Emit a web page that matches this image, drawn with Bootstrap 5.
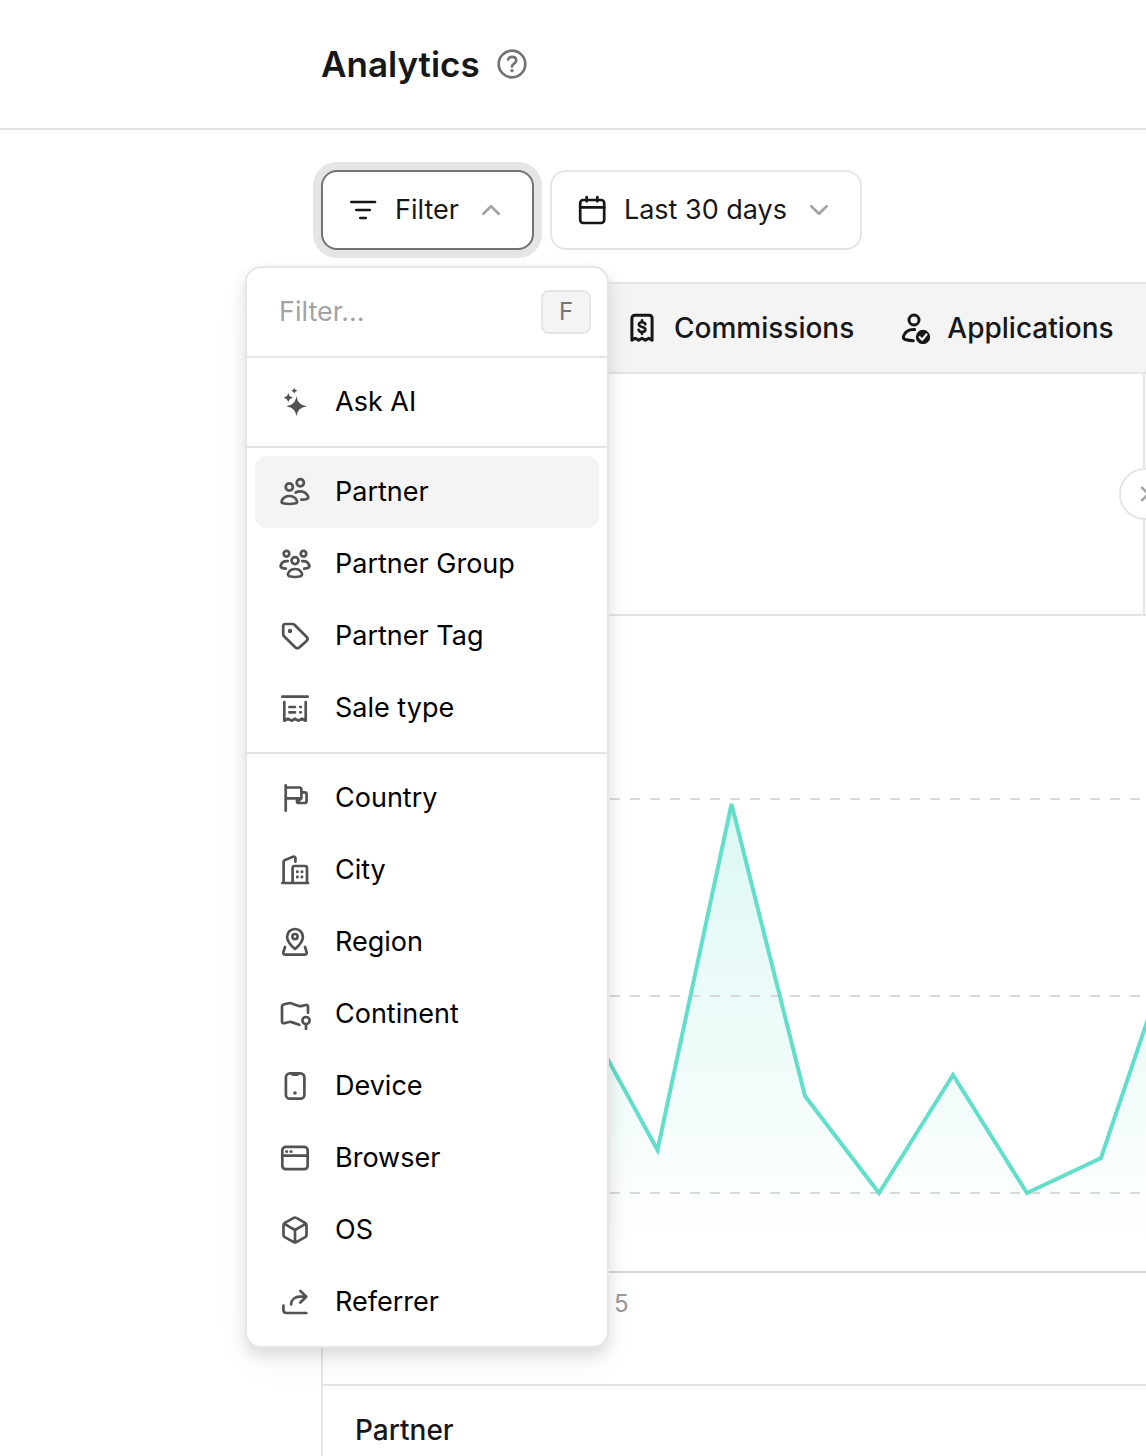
<!DOCTYPE html>
<html lang="en">
<head>
<meta charset="utf-8">
<meta name="viewport" content="width=device-width, initial-scale=1">
<title>Analytics</title>
<link href="https://cdn.jsdelivr.net/npm/bootstrap@5.3.0/dist/css/bootstrap.min.css" rel="stylesheet">
<style>
:root { --line: #e5e5e5; --ink: #171717; --muted: #737373; --teal: #62deca; }
body { font-family: Inter, "Liberation Sans", sans-serif; font-size: 28px; line-height: 40px; color: var(--ink); background: #fff; overflow: hidden; }
svg.ico { width: 32px; height: 32px; flex: none; fill: none; stroke: currentColor; stroke-width: 2.7; stroke-linecap: round; stroke-linejoin: round; }
svg .solid { fill: currentColor; stroke: none; }
.page-head { height: 130px; border-bottom: 2px solid var(--line); }
.page-head, .page-main { padding-left: 321px; }
.page-title { font-size: 35px; line-height: 40px; font-weight: 600; }
.help { color: var(--muted); line-height: 0; }
.toolbar { padding: 40px 0 32px; gap: 16px; }
.pick { height: 80px; padding: 0 25px 0 24px; gap: 16px; border: 2px solid var(--line); border-radius: 16px; background: #fff; color: var(--ink); font-size: 27px; line-height: 40px; --bs-btn-hover-bg: #fff; }
.pick.show { background: #fff; border-color: var(--muted); color: var(--ink); box-shadow: 0 0 0 8px var(--line); }
.chev { color: #a3a3a3; }
.filter-menu { --bs-dropdown-bg: #fff; top: 96px; left: -76px; width: 364px; padding: 0; border: 2px solid var(--line); border-radius: 16px; font-size: 27px; color: #000; box-shadow: 0 8px 16px rgba(0,0,0,.12), 0 16px 40px rgba(0,0,0,.03); }
.menu-search { height: 90px; padding: 0 16px 0 32px; border-bottom: 2px solid var(--line); }
.menu-search input { min-width: 0; border: 0; padding: 0; outline: 0; background: none; color: #000; }
.menu-search input::placeholder { color: #a3a3a3; opacity: 1; }
.key { flex: none; width: 50px; height: 44px; padding: 0; border: 2px solid var(--line); border-radius: 8px; background: #f4f4f4; color: var(--muted); font-family: inherit; font-size: 24px; line-height: 40px; text-align: center; }
.menu-group { padding: 8px; }
.menu-group + .menu-group { border-top: 2px solid var(--line); }
.entry { height: 72px; padding: 0 24px; gap: 24px; border-radius: 12px; color: #000; font-size: 27px; }
.entry svg { color: #525252; }
.entry.active, .entry:hover { background: #f4f4f4; color: #000; }
.panel { border: solid var(--line); border-width: 2px 0 0 2px; border-top-left-radius: 24px; }
.tabs { height: 90px; padding-left: 303px; gap: 45px; background: #f4f4f4; border-top-left-radius: 22px; border-bottom: 2px solid var(--line); }
.tab-link { gap: 16px; font-weight: 500; color: var(--ink); text-decoration: none; }
.tab-link svg.ico { stroke-width: 3; }
.stats { height: 242px; border-bottom: 2px solid var(--line); }
.stat { border-right: 2px solid var(--line); margin-right: 1px; }
.next { right: -28px; width: 52px; height: 52px; border: 2px solid var(--line); background: #fff; color: #a3a3a3; line-height: 0; }
.next svg.ico { width: 28px; height: 28px; stroke-width: 3; }
.chart { display: block; width: 100%; height: 668px; }
.axis { padding: 0 0 60px 291px; font-size: 24px; color: #999; }
.list-head { height: 90px; padding-left: 32px; border-top: 2px solid var(--line); font-weight: 500; }
</style>
</head>
<body>
<header class="page-head d-flex align-items-center">
  <h1 class="page-title mb-0 me-3">Analytics</h1>
  <button type="button" class="help btn p-0 border-0" aria-label="Help">
    <svg class="ico" viewBox="0 0 32 32"><circle cx="16" cy="16" r="13.3"/><path d="M12.2 11.4C12.8 9.8 14.2 8.9 16 8.9C18.4 8.9 20.2 10.3 20.2 12.6C20.2 15.7 16 15.6 16 18.6"/><circle class="solid" cx="16" cy="22.7" r="1.6"/></svg>
  </button>
</header>

<main class="page-main">
  <div class="toolbar d-flex">
    <div class="dropdown">
      <button type="button" class="pick btn show d-flex align-items-center" aria-expanded="true">
        <svg class="ico" viewBox="0 0 32 32"><path d="M4.3 8H28M9.3 16H22.7M13.3 24H18.7"/></svg>
        Filter
        <svg class="ico chev" viewBox="0 0 32 32"><path d="M8.300 19.700L16 12.300L23.700 19.700"/></svg>
      </button>
      <div class="filter-menu dropdown-menu show">
        <div class="menu-search d-flex align-items-center">
          <input type="text" class="flex-fill" placeholder="Filter..." aria-label="Filter">
          <kbd class="key">F</kbd>
        </div>
        <div class="menu-group">
          <button type="button" class="entry dropdown-item d-flex align-items-center">
            <svg class="ico" viewBox="0 0 32 32"><path class="solid" d="M17.500 10.300C18.800 16.700 20.900 18.700 27.700 20.300C20.900 21.900 18.800 23.900 17.500 30.300C16.200 23.900 14.100 21.900 7.300 20.300C14.100 18.700 16.200 16.700 17.500 10.300ZM9.300 6.800C10.100 10 11 10.900 14.200 11.700C11 12.500 10.100 13.400 9.300 16.600C8.500 13.400 7.600 12.500 4.400 11.700C7.600 10.900 8.500 10 9.300 6.800ZM15.300 1.500C15.900 3.600 16.500 4.200 18.600 4.800C16.500 5.400 15.900 6 15.300 8.100C14.700 6 14.100 5.400 12 4.800C14.100 4.200 14.700 3.600 15.300 1.500Z"/></svg>
            Ask AI
          </button>
        </div>
        <div class="menu-group">
          <button type="button" class="entry dropdown-item active d-flex align-items-center">
            <svg class="ico" viewBox="0 0 32 32"><circle cx="10.300" cy="11" r="3.600"/><circle cx="21.300" cy="6.700" r="3.600"/><path d="M10.300 20C14 20 16.700 22 17.900 24.700C18.500 26.100 17.700 27 16.500 27.300C12.600 28.200 8 28.200 4.200 27.300C3 27 2.200 26.100 2.800 24.700C4 22 6.700 20 10.300 20ZM16.700 16.500C18.100 15.700 19.600 15.300 21.300 15.300C25 15.300 27.800 17.400 29.100 20.500C29.600 21.800 28.800 22.700 27.700 23C26 23.500 24.200 23.700 22.300 23.600"/></svg>
            Partner
          </button>
          <button type="button" class="entry dropdown-item d-flex align-items-center">
            <svg class="ico" viewBox="0 0 32 32"><circle cx="7.500" cy="5.700" r="2.800"/><circle cx="24.500" cy="5.700" r="2.800"/><circle cx="16" cy="12.600" r="3.500"/><path d="M16 21C19.200 21 21.800 22.800 22.900 25.500C23.400 26.800 22.700 27.800 21.600 28.200C18 29.200 14 29.200 10.400 28.200C9.300 27.800 8.600 26.800 9.100 25.500C10.200 22.800 12.800 21 16 21ZM8.700 13.200C5.300 12.900 2.600 14.600 1.700 17.500C1.400 18.700 2 19.500 3 19.900C4.200 20.300 5.500 20.600 6.800 20.700M23.300 13.200C26.700 12.900 29.400 14.600 30.300 17.500C30.600 18.700 30 19.500 29 19.900C27.800 20.300 26.500 20.600 25.200 20.700"/></svg>
            Partner Group
          </button>
          <button type="button" class="entry dropdown-item d-flex align-items-center">
            <svg class="ico" viewBox="0 0 32 32"><path d="M6.300 4H13.300C14.200 4 15 4.300 15.700 5L27.500 16.700C28.800 18 28.800 19.700 27.500 21L20.500 27.300C19.200 28.600 17.500 28.600 16.200 27.300L5.100 16.300C4.500 15.700 4.200 15 4.200 14.200V6.100C4.200 4.800 5 4 6.300 4Z"/><circle class="solid" cx="11" cy="11" r="2.200"/></svg>
            Partner Tag
          </button>
          <button type="button" class="entry dropdown-item d-flex align-items-center">
            <svg class="ico" viewBox="0 0 32 32"><path d="M3.300 4.700H28.700M5.300 10V28.700L8.900 26.700L12.400 28.700L16 26.700L19.600 28.700L23.100 26.700L26.700 28.700V10M10.400 15H16M10.400 20.300H16M21.300 15H21.800M21.300 20.300H21.800"/></svg>
            Sale type
          </button>
        </div>
        <div class="menu-group">
          <button type="button" class="entry dropdown-item d-flex align-items-center">
            <svg class="ico" viewBox="0 0 32 32"><path d="M6.700 3.300V28.700M6.700 5.500H20.400C21.700 5.500 22.400 6.200 22.400 7.500V16.300H6.700M22.400 10.300H25.600C26.900 10.300 27.600 11 27.600 12.300V19C27.600 20.300 26.900 21 25.600 21H20.200C18.900 21 18 20.200 18 19V16.600M18 20.300L22.400 16.300"/></svg>
            Country
          </button>
          <button type="button" class="entry dropdown-item d-flex align-items-center">
            <svg class="ico" viewBox="0 0 32 32"><path d="M3.300 29H29M4.600 29V8C4.600 7 5.100 6.300 6 5.900L14 2.700C15.400 2.200 16.400 3 16.400 4.300V7.700M13.600 29V14C13.600 12.800 14.400 12 15.600 12H26C27.200 12 28 12.800 28 14V29"/><g class="solid"><rect x="17" y="16.300" width="2.700" height="3" rx="1"/><rect x="21.600" y="16.300" width="2.700" height="3" rx="1"/><rect x="17" y="21.600" width="2.700" height="3" rx="1"/><rect x="21.600" y="21.600" width="2.700" height="3" rx="1"/></g></svg>
            City
          </button>
          <button type="button" class="entry dropdown-item d-flex align-items-center">
            <svg class="ico" viewBox="0 0 32 32"><path d="M16 23C19.500 20.100 23.900 15.900 23.900 11C23.900 6.300 20.400 3 16 3C11.600 3 8.100 6.300 8.100 11C8.100 15.900 12.500 20.100 16 23ZM6 21L4.400 26C3.900 27.600 4.800 28.700 6.400 28.700H25.600C27.200 28.700 28.100 27.600 27.600 26L26 21"/><circle cx="16" cy="10.600" r="2.600"/></svg>
            Region
          </button>
          <button type="button" class="entry dropdown-item d-flex align-items-center">
            <svg class="ico" viewBox="0 0 32 32"><path d="M20.300 26.800L12.500 24.100C11.700 23.800 11 23.800 10.200 24L5.200 25.200C3.900 25.500 3 24.800 3 23.500V8.500C3 7.400 3.500 6.800 4.500 6.500L9.700 5.200C10.500 5 11.200 5 12 5.300L19.800 8C20.600 8.200 21.300 8.300 22.100 8.100L26.700 7C28.100 6.700 29 7.400 29 8.700V14.700M27 26.300V31"/><circle cx="27" cy="22.600" r="3.600"/></svg>
            Continent
          </button>
          <button type="button" class="entry dropdown-item d-flex align-items-center">
            <svg class="ico" viewBox="0 0 32 32"><rect x="6.900" y="3.300" width="18.500" height="25.400" rx="4"/><path class="solid" d="M12 3H20V4C20 5.300 19.300 6 18 6H14C12.700 6 12 5.300 12 4Z"/><circle class="solid" cx="16" cy="23" r="1.800"/></svg>
            Device
          </button>
          <button type="button" class="entry dropdown-item d-flex align-items-center">
            <svg class="ico" viewBox="0 0 32 32"><rect x="3.300" y="4.900" width="25.400" height="22.300" rx="3.500"/><path d="M3.300 13.600H28.700"/><g class="solid"><circle cx="7.700" cy="9.400" r="1.500"/><circle cx="12" cy="9.400" r="1.500"/></g></svg>
            Browser
          </button>
          <button type="button" class="entry dropdown-item d-flex align-items-center">
            <svg class="ico" viewBox="0 0 32 32"><path d="M17.300 3.900L26.200 8.900C27 9.400 27.500 10.200 27.500 11.100V20.900C27.500 21.800 27 22.600 26.200 23.100L17.300 28.100C16.500 28.600 15.500 28.600 14.700 28.100L5.800 23.100C5 22.600 4.500 21.800 4.500 20.900V11.100C4.500 10.200 5 9.400 5.800 8.900L14.700 3.900C15.500 3.400 16.500 3.400 17.300 3.900ZM5 9.700L16 16L27 9.700M16 16V28.300"/></svg>
            OS
          </button>
          <button type="button" class="entry dropdown-item d-flex align-items-center">
            <svg class="ico" viewBox="0 0 32 32"><path d="M21.300 4.900L27.300 10.700L21.300 16.500M27.300 10.700H21C16 10.700 12.400 13.800 12.100 18.400M4.400 19.700V23.700C4.400 25.800 5.600 27 7.700 27H27.300"/></svg>
            Referrer
          </button>
        </div>
      </div>
    </div>
    <button type="button" class="pick btn d-flex align-items-center">
      <svg class="ico" viewBox="0 0 32 32"><rect x="4.200" y="6" width="24" height="23" rx="3"/><path d="M4.200 13.300H28.200M10.700 3V7.300M21.300 3V7.300"/></svg>
      Last 30 days
      <svg class="ico chev" viewBox="0 0 32 32"><path d="M8.300 12.300L16 19.700L23.700 12.300"/></svg>
    </button>
  </div>

  <section class="panel">
    <nav class="tabs d-flex align-items-center" aria-label="Metrics">
      <a href="#" class="tab-link d-flex align-items-center">
        <svg class="ico" viewBox="0 0 32 32"><path d="M5.900 28.300V6.300C5.900 4.400 7.100 3.300 9 3.300H23C24.900 3.300 26.100 4.400 26.100 6.300V28.300L22.700 26.300L19.400 28.300L16 26.300L12.600 28.300L9.300 26.300Z"/><path stroke-width="2.600" d="M19.300 12.300C18.800 10.900 17.500 10.300 16 10.300C14.200 10.300 12.900 11.200 12.900 12.600C12.900 16 19.400 14 19.400 17.600C19.400 19.100 18 20 16.100 20C14.300 20 13 19.200 12.600 17.800M16 8.300V10.300M16 20V22"/></svg>
        Commissions
      </a>
      <a href="#" class="tab-link d-flex align-items-center">
        <svg class="ico" viewBox="0 0 32 32"><circle cx="15" cy="8" r="5"/><path d="M15.700 17.600C10.300 17.300 6 19.900 4.500 24.200C4 25.800 4.900 27 6.300 27.500C9 28.300 11.800 28.700 14.300 28.700"/><circle class="solid" cx="24" cy="25" r="7.200"/><path style="stroke-width:2.300" stroke="#f4f4f4" d="M20.700 25.200L23.200 27.700L27.400 22.500"/></svg>
        Applications
      </a>
    </nav>
    <div class="stats d-flex">
      <div class="stat flex-fill position-relative d-flex align-items-center">
        <button type="button" class="next btn rounded-circle position-absolute p-0" aria-label="Next">
          <svg class="ico" viewBox="0 0 32 32"><path d="M12.700 9L19.700 16L12.700 23"/></svg>
        </button>
      </div>
    </div>
    <svg class="chart" viewBox="0 0 823 668" preserveAspectRatio="xMinYMin slice" role="img" aria-label="Partner activity over time">
      <defs><linearGradient id="fade" gradientUnits="userSpaceOnUse" x1="0" y1="188" x2="0" y2="640"><stop offset="0" stop-color="#62deca" stop-opacity=".22"/><stop offset="1" stop-color="#62deca" stop-opacity="0"/></linearGradient></defs>
      <path fill="url(#fade)" d="M260 398L334.500 534L408.500 188L482 480L556 577L630 459L704 577L778 542L852 323V656H260Z"/>
      <path fill="none" stroke="#d9d9d9" stroke-width="2" stroke-dasharray="10 10" d="M7 183H900M7 380H900M7 577H900"/>
      <path stroke="#d6d6d6" stroke-width="2" d="M0 656H900"/>
      <path fill="none" stroke="#62deca" stroke-width="4" d="M260 398L334.500 534L408.500 188L482 480L556 577L630 459L704 577L778 542L852 323"/>
    </svg>
    <div class="axis">5</div>
    <div class="list-head d-flex align-items-center">Partner</div>
  </section>
</main>
<script src="https://cdn.jsdelivr.net/npm/bootstrap@5.3.0/dist/js/bootstrap.bundle.min.js"></script>
</body>
</html>
